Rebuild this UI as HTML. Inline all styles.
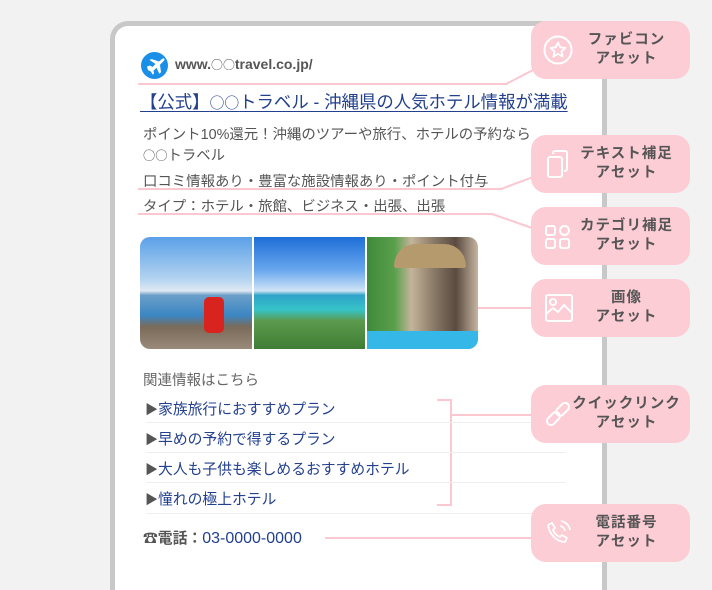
<!DOCTYPE html>
<html><head><meta charset="utf-8"><style>
*{margin:0;padding:0;box-sizing:border-box}
html,body{width:712px;height:590px;overflow:hidden}
body{background:#f2f2f2;position:relative;font-family:"Liberation Sans","Noto Sans CJK JP",sans-serif}
.frame{position:absolute;left:110px;top:21px;width:497px;height:569px;background:#fff;border:5px solid #c8c8c8;border-bottom:none;border-radius:18px 18px 0 0}
.t{position:absolute;white-space:nowrap}
.g{color:#555;font-size:14.4px}
.b{color:#23408e}
.o{font-family:"Noto Sans CJK JP",sans-serif;font-size:.85em}
.pl{position:absolute;background:#fbc8d2}
.box{position:absolute;left:531px;width:159px;height:58px;background:#fdcdd6;border-radius:15px}
.box .lbl{position:absolute;left:36px;right:4px;top:10px;text-align:center;color:#555;font-weight:bold;font-size:14.5px;line-height:19px;letter-spacing:1px}
.box svg{position:absolute;left:12px;top:14px}
.sep{position:absolute;left:146px;width:420px;height:1px;background:#eee}
.im{position:absolute;top:237px;height:112px}
.lk{font-size:14.8px}
</style></head><body>
<div class="frame"></div>

<svg style="position:absolute;left:141px;top:52px" width="27" height="27" viewBox="0 0 27 27"><circle cx="13.5" cy="13.5" r="13.5" fill="#1a8fe8"/><path d="M6 14.5l3-1 2.5 1.5 3-3-6-4 2-1 7.5 2.5 3-2.5c1-.8 2.5-.8 2.5.3s-.7 1.6-1.5 2.5l-3 3 1 7.5-1.7 1.5-2.8-6-3 3 .5 2.8-1.5 1-1.5-3-3-1.5z" fill="#fff"/></svg>
<div class="t" style="left:175px;top:56px;font-size:14px;color:#555;font-weight:bold">www.<span class="o" style="font-weight:normal">○○</span>travel.co.jp/</div>
<div class="t b" style="left:140px;top:89px;font-size:17.4px;text-decoration:underline;text-underline-offset:3px">【公式】<span class="o">○○</span>トラベル - 沖縄県の人気ホテル情報が満載</div>
<div class="t g" style="left:143px;top:123px">ポイント10%還元！沖縄のツアーや旅行、ホテルの予約なら</div>
<div class="t g" style="left:143px;top:144px"><span class="o">○○</span>トラベル</div>
<div class="t g" style="left:143px;top:170px">口コミ情報あり・豊富な施設情報あり・ポイント付与</div>
<div class="t g" style="left:143px;top:195px">タイプ：ホテル・旅館、ビジネス・出張、出張</div>

<div class="pl" style="left:138px;top:83px;width:370px;height:2px"></div>
<svg style="position:absolute;left:500px;top:65px" width="35" height="22"><line x1="6" y1="19" x2="33" y2="5" stroke="#fbc8d2" stroke-width="2"/></svg>
<div class="pl" style="left:138px;top:188px;width:365px;height:2px"></div>
<svg style="position:absolute;left:495px;top:170px" width="40" height="22"><line x1="6" y1="19" x2="38" y2="7" stroke="#fbc8d2" stroke-width="2"/></svg>
<div class="pl" style="left:138px;top:213px;width:355px;height:2px"></div>
<svg style="position:absolute;left:488px;top:210px" width="45" height="22"><line x1="4" y1="4" x2="44" y2="18" stroke="#fbc8d2" stroke-width="2"/></svg>
<div class="pl" style="left:478px;top:307px;width:55px;height:2px"></div>
<div class="pl" style="left:437px;top:399px;width:15px;height:2px"></div>
<div class="pl" style="left:437px;top:504px;width:15px;height:2px"></div>
<div class="pl" style="left:450px;top:399px;width:2px;height:107px"></div>
<div class="pl" style="left:450px;top:414px;width:83px;height:2px"></div>
<div class="pl" style="left:325px;top:537px;width:208px;height:2px"></div>

<div class="im" style="left:140px;width:112px;border-radius:10px 0 0 10px;background:linear-gradient(180deg,#5aa0e8 0%,#b5d4f0 38%,#dfe9f2 48%,#6b9fc8 52%,#3b86c4 70%,#7a6a5a 80%,#9a8a7a 100%)"></div>
<div style="position:absolute;left:204px;top:297px;width:20px;height:36px;background:#d8231e;border-radius:5px"></div>
<div class="im" style="left:254px;width:111px;background:linear-gradient(180deg,#1e6ed8 0%,#6aa8ee 30%,#cfe4f5 48%,#2fa3c8 52%,#36c3c7 65%,#5c9a4c 75%,#3f7d36 100%)"></div>
<div class="im" style="left:367px;width:111px;border-radius:0 10px 10px 0;background:linear-gradient(90deg,#3e8a3a 0%,#5aa04c 25%,#c4b49a 40%,#8a7a68 60%,#5a4a40 80%,#c5b5a0 100%)"></div>
<div style="position:absolute;left:394px;top:244px;width:72px;height:24px;background:#b59a6e;border-radius:40px 40px 4px 4px"></div>
<div style="position:absolute;left:367px;top:331px;width:111px;height:18px;background:#35b8e8;border-radius:0 0 10px 0"></div>

<div class="t" style="left:143px;top:369px;font-size:14.5px;color:#666">関連情報はこちら</div>
<div class="t b lk" style="left:145px;top:398px"><span style="color:#555;font-size:13px">▶</span>家族旅行におすすめプラン</div>
<div class="sep" style="top:422px"></div>
<div class="t b lk" style="left:145px;top:428px"><span style="color:#555;font-size:13px">▶</span>早めの予約で得するプラン</div>
<div class="sep" style="top:452px"></div>
<div class="t b lk" style="left:145px;top:458px"><span style="color:#555;font-size:13px">▶</span>大人も子供も楽しめるおすすめホテル</div>
<div class="sep" style="top:482px"></div>
<div class="t b lk" style="left:145px;top:488px"><span style="color:#555;font-size:13px">▶</span>憧れの極上ホテル</div>
<div class="sep" style="top:513px"></div>
<div class="t" style="left:143px;top:527px;font-size:14.8px;color:#555"><b>☎電話：</b><span class="b" style="font-size:16px">03-0000-0000</span></div>

<div class="box" style="top:21px"><svg width="30" height="30" viewBox="0 0 30 30"><circle cx="15" cy="15" r="13.5" fill="none" stroke="#fff" stroke-width="2"/><path d="M15 7.5l2.2 4.8 5.2.6-3.9 3.5 1.1 5.1-4.6-2.6-4.6 2.6 1.1-5.1-3.9-3.5 5.2-.6z" fill="none" stroke="#fff" stroke-width="1.8" stroke-linejoin="round"/></svg><div class="lbl">ファビコン<br>アセット</div></div>
<div class="box" style="top:135px"><svg width="30" height="30" viewBox="0 0 30 30"><rect x="5" y="8" width="14" height="20" rx="2" fill="none" stroke="#fff" stroke-width="2"/><path d="M10 5V4a2 2 0 012-2h10a2 2 0 012 2v16a2 2 0 01-2 2h-1" fill="none" stroke="#fff" stroke-width="2"/></svg><div class="lbl">テキスト補足<br>アセット</div></div>
<div class="box" style="top:207px"><svg width="30" height="30" viewBox="0 0 30 30"><rect x="3" y="5" width="9" height="9" rx="2" fill="none" stroke="#fff" stroke-width="2"/><circle cx="21.5" cy="9.5" r="4.5" fill="none" stroke="#fff" stroke-width="2"/><rect x="3" y="18" width="9" height="9" rx="2" fill="none" stroke="#fff" stroke-width="2"/><rect x="17" y="18" width="9" height="9" rx="2" fill="none" stroke="#fff" stroke-width="2"/></svg><div class="lbl">カテゴリ補足<br>アセット</div></div>
<div class="box" style="top:279px"><svg width="30" height="30" viewBox="0 0 30 30"><rect x="3" y="2" width="26" height="26" rx="2" fill="none" stroke="#fff" stroke-width="2"/><circle cx="10" cy="9" r="3" fill="none" stroke="#fff" stroke-width="2"/><path d="M3 21l7-6 5 4 6-7 8 8" fill="none" stroke="#fff" stroke-width="2"/></svg><div class="lbl">画像<br>アセット</div></div>
<div class="box" style="top:385px"><svg width="30" height="30" viewBox="0 0 30 30"><g fill="none" stroke="#fff" stroke-width="2" transform="rotate(-45 15 15)"><rect x="1" y="11" width="15" height="8" rx="4"/><rect x="14" y="11" width="15" height="8" rx="4"/></g></svg><div class="lbl">クイックリンク<br>アセット</div></div>
<div class="box" style="top:504px"><svg width="30" height="30" viewBox="0 0 30 30"><path d="M9 5l3 5-2 2c1 3 4 6 7 7l2-2 5 3-2 4c-8 0-16-8-17-17z" fill="none" stroke="#fff" stroke-width="1.8" stroke-linejoin="round"/><path d="M17 8a6 6 0 015 5M18 3a11 11 0 019 9" fill="none" stroke="#fff" stroke-width="1.8"/></svg><div class="lbl">電話番号<br>アセット</div></div>
</body></html>
